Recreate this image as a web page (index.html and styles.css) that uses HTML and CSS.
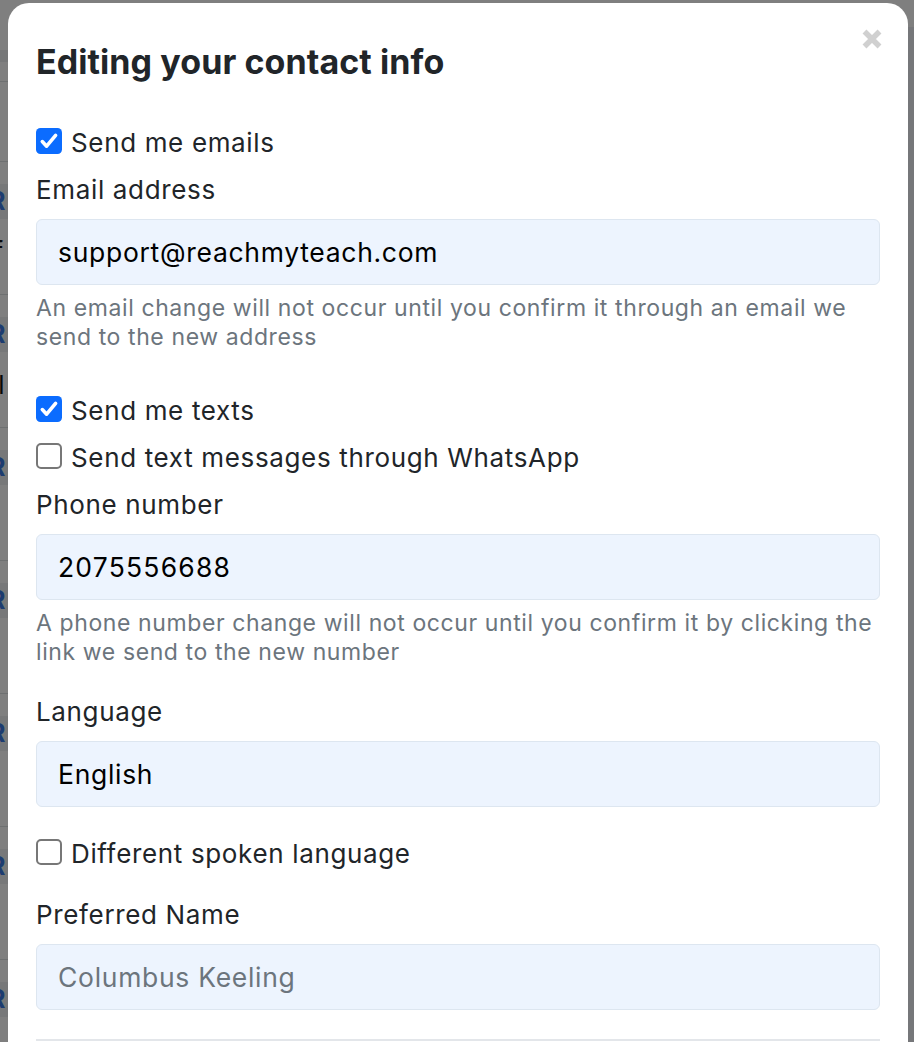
FILE: index.html
```html
<!DOCTYPE html>
<html lang="en">
<head>
<meta charset="utf-8">
<title>Editing your contact info</title>
<link rel="stylesheet" href="styles.css">
</head>
<body>
<div class="page">
  <div class="page-main">
    <div class="page-top"></div>
    <div class="page-band"></div>
    <div class="page-head"></div>
    <div class="page-gap"></div>
    <div class="page-row"><span class="row-btn">R</span><span class="row-text">of</span></div>
    <div class="page-row"><span class="row-btn">R</span><span class="row-text row-text--b">el</span></div>
    <div class="page-row"><span class="row-btn">R</span></div>
    <div class="page-row"><span class="row-btn">R</span></div>
    <div class="page-row"><span class="row-btn">R</span></div>
    <div class="page-row"><span class="row-btn">R</span></div>
    <div class="page-row"><span class="row-btn">R</span></div>
  </div>
  <div class="page-side"></div>
</div>
<div class="backdrop"></div>

<div class="modal">
  <div class="modal-head">
    <h2 class="modal-title">Editing your contact info</h2>
    <button class="close" type="button" aria-label="Close">
      <svg viewBox="0 0 20 20" width="20" height="20"><path d="M2.5 2.5L17.5 17.5M17.5 2.5L2.5 17.5" stroke="#d0d0d0" stroke-width="5.5" fill="none"/></svg>
    </button>
  </div>
  <div class="modal-body">
    <label class="check">
      <svg class="box" viewBox="0 0 26 26"><rect width="26" height="26" rx="4.5" fill="#0b6cff"/><path d="M6.3 13.6L10.6 18.2L19.6 7.4" fill="none" stroke="#fff" stroke-width="3.6" stroke-linecap="round" stroke-linejoin="round"/></svg>
      <span>Send me emails</span>
    </label>
    <div class="label">Email address</div>
    <input class="field" type="text" value="support@reachmyteach.com">
    <p class="help">An email change will not occur until you confirm it through an email we send to the new address</p>

    <label class="check check--after-help">
      <svg class="box" viewBox="0 0 26 26"><rect width="26" height="26" rx="4.5" fill="#0b6cff"/><path d="M6.3 13.6L10.6 18.2L19.6 7.4" fill="none" stroke="#fff" stroke-width="3.6" stroke-linecap="round" stroke-linejoin="round"/></svg>
      <span>Send me texts</span>
    </label>
    <label class="check">
      <svg class="box" viewBox="0 0 26 26"><rect x="1" y="1" width="24" height="24" rx="4" fill="#fff" stroke="#777" stroke-width="2"/></svg>
      <span>Send text messages through WhatsApp</span>
    </label>
    <div class="label">Phone number</div>
    <input class="field field--digits" type="text" value="2075556688">
    <p class="help">A phone number change will not occur until you confirm it by clicking the link we send to the new number</p>

    <div class="label label--group">Language</div>
    <input class="field" type="text" value="English" readonly>

    <label class="check check--group">
      <svg class="box" viewBox="0 0 26 26"><rect x="1" y="1" width="24" height="24" rx="4" fill="#fff" stroke="#777" stroke-width="2"/></svg>
      <span>Different spoken language</span>
    </label>

    <div class="label label--after-check">Preferred Name</div>
    <input class="field" type="text" placeholder="Columbus Keeling">

    <div class="divider"></div>
  </div>
</div>
</body>
</html>
```

FILE: styles.css
```css
* {
  box-sizing: border-box;
}

html,
body {
  margin: 0;
  height: 100%;
  overflow: hidden;
}

body {
  font-family: Inter, "Noto Sans", "Liberation Sans", sans-serif;
  background: #fff;
  color: #212529;
}

/* ---------- background page (under the backdrop) ---------- */
.page {
  display: grid;
  grid-template-columns: 1fr 6px;
  min-height: 1042px;
}

.page-top {
  height: 50px;
}

.page-band {
  height: 12px;
  background: #eceef0;
}

.page-head {
  height: 20px;
  border-bottom: 1px solid #dde0e3;
}

.page-gap {
  height: 79px;
}

.page-row {
  height: 133px;
  border-top: 1px solid #dde0e3;
  padding-top: 22px;
}

.row-btn {
  display: block;
  width: 60px;
  height: 35px;
  margin-left: -30px;
  padding-left: 19px;
  background: #eef0f3;
  color: #3a78e0;
  font-weight: 700;
  font-size: 25px;
  line-height: 35px;
}

.row-text {
  display: block;
  margin-top: 18px;
  margin-left: -22px;
  font-size: 26px;
  line-height: 30px;
  color: #111;
}

.row-text--b {
  margin-left: -17px;
}

.page-side {
  margin-top: 27px;
  background: #eceff4;
}

.backdrop {
  position: fixed;
  inset: 0;
  background: rgba(0, 0, 0, 0.5);
}

/* ---------- modal ---------- */
.modal {
  position: absolute;
  top: 3px;
  left: 8px;
  width: 900px;
  height: 1120px;
  background: #fff;
  border-radius: 21px;
  padding: 39px 28px 0;
}

.modal-head {
  display: flex;
  justify-content: space-between;
  align-items: flex-start;
}

.modal-title {
  margin: 0;
  font-size: 34px;
  font-weight: 700;
  line-height: 40px;
  letter-spacing: 0.08px;
  color: #212529;
}

.close {
  display: block;
  margin: -13px -2px 0 0;
  padding: 0;
  border: 0;
  background: none;
  width: 20px;
  height: 20px;
}

.close svg {
  display: block;
}

.modal-body {
  padding-top: 41px;
}

.check {
  display: flex;
  align-items: flex-start;
  gap: 9px;
  font-size: 26px;
  line-height: 39px;
  letter-spacing: 0.65px;
  color: #212529;
  margin-bottom: 8px;
}

.check--after-help {
  margin-top: 40px;
}

.check--group {
  margin-top: 27px;
}

.box {
  flex: none;
  width: 26px;
  height: 26px;
  margin-top: 5px;
}

.label {
  font-size: 26px;
  line-height: 39px;
  letter-spacing: 0.65px;
  color: #212529;
  margin-bottom: 10px;
}

.label--group {
  margin-top: 26px;
}

.label--after-check {
  margin-top: 22px;
}

.field {
  display: block;
  width: 100%;
  height: 66px;
  padding: 0 21px;
  font-family: inherit;
  font-size: 26.5px;
  letter-spacing: 0.7px;
  color: #000;
  background: #edf4fe;
  border: 1px solid #dde6f0;
  border-radius: 6px;
  outline: none;
}

.field--digits {
  letter-spacing: 1.2px;
}

.field::placeholder {
  color: #6c757d;
}

.help {
  margin: 9px 0 0;
  font-size: 23px;
  line-height: 28.5px;
  letter-spacing: 0.6px;
  color: #6c757d;
}

.divider {
  margin-top: 29px;
  border-top: 2px solid #e3e6ea;
}
```
